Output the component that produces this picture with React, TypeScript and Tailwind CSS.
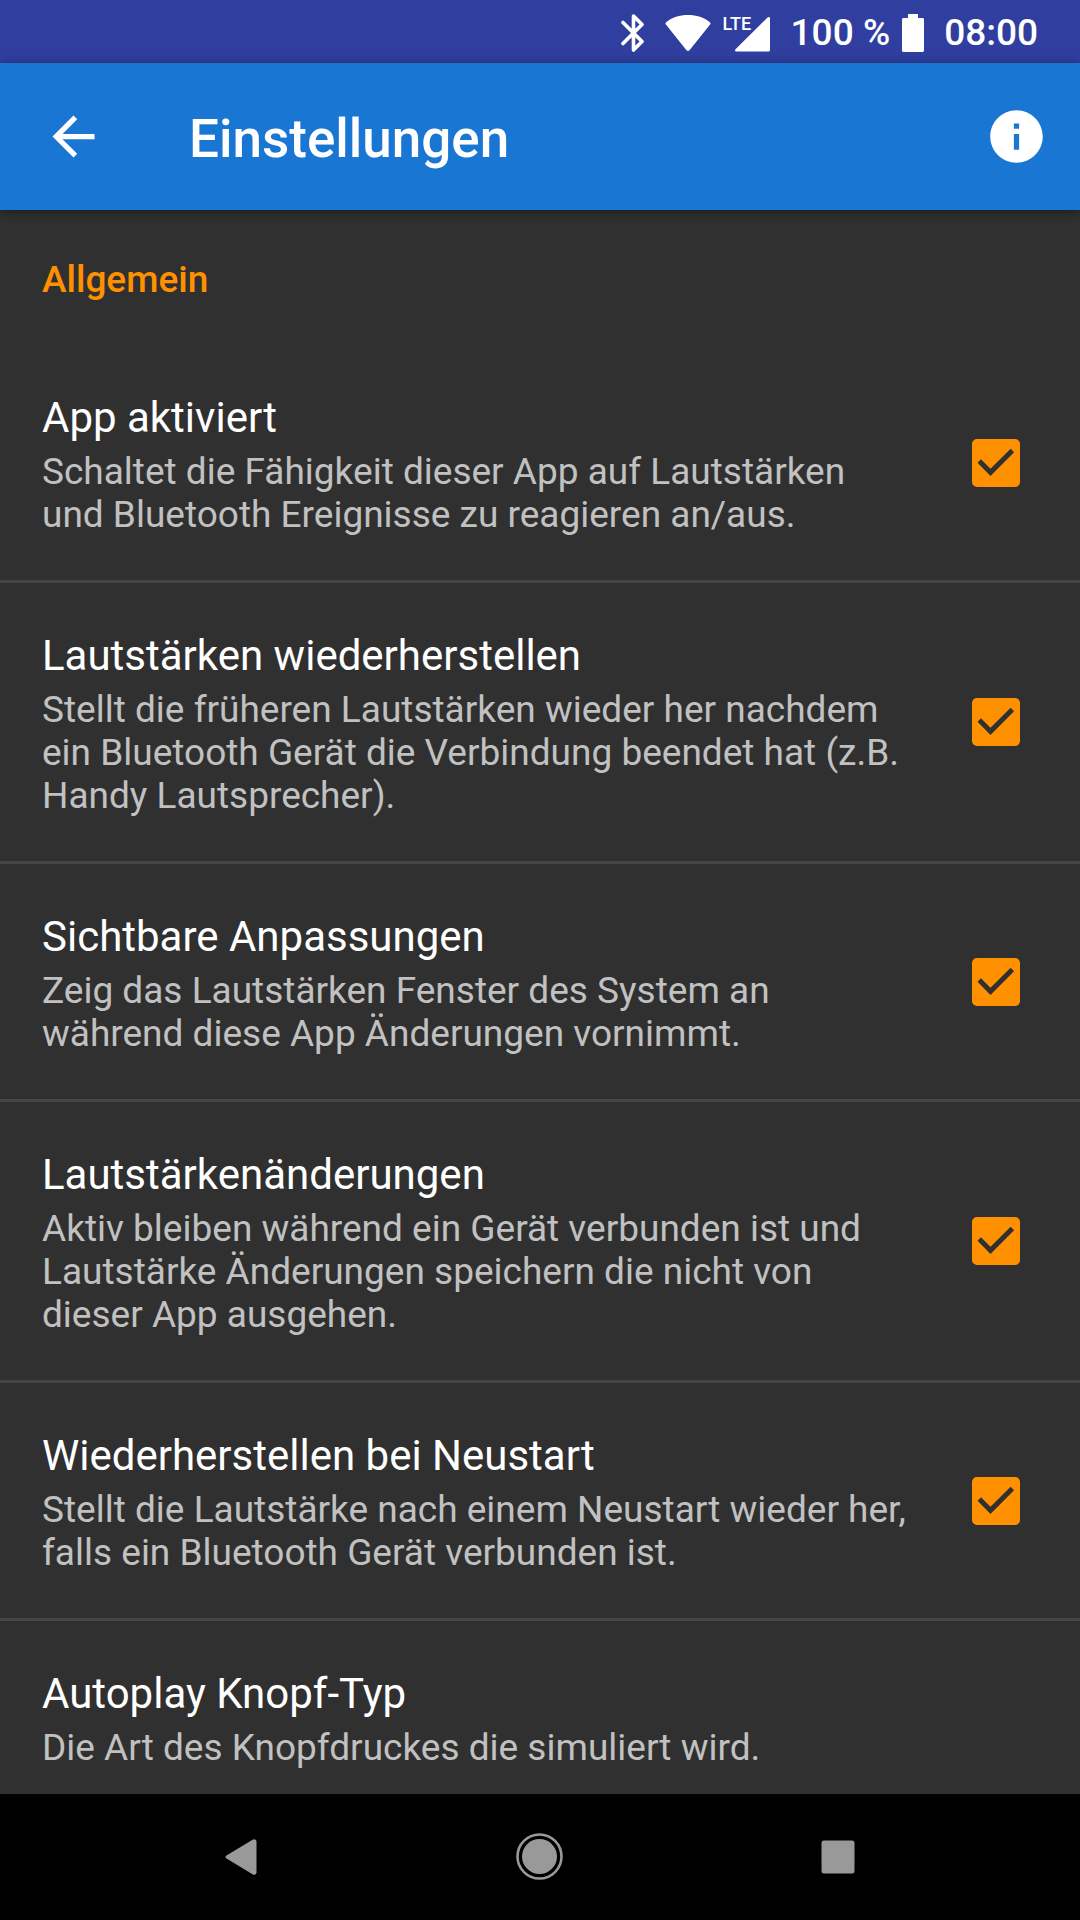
import { useState } from "react";

type Preference = {
  id: string;
  title: string;
  summary: string;
};

const preferences: Preference[] = [
  {
    id: "enabled",
    title: "App aktiviert",
    summary:
      "Schaltet die Fähigkeit dieser App auf Lautstärken und Bluetooth Ereignisse zu reagieren an/aus."
  },
  {
    id: "restore",
    title: "Lautstärken wiederherstellen",
    summary:
      "Stellt die früheren Lautstärken wieder her nachdem ein Bluetooth Gerät die Verbindung beendet hat (z.B. Handy Lautsprecher)."
  },
  {
    id: "visible",
    title: "Sichtbare Anpassungen",
    summary:
      "Zeig das Lautstärken Fenster des System an während diese App Änderungen vornimmt."
  },
  {
    id: "listener",
    title: "Lautstärkenänderungen",
    summary:
      "Aktiv bleiben während ein Gerät verbunden ist und Lautstärke Änderungen speichern die nicht von dieser App ausgehen."
  },
  {
    id: "boot",
    title: "Wiederherstellen bei Neustart",
    summary:
      "Stellt die Lautstärke nach einem Neustart wieder her, falls ein Bluetooth Gerät verbunden ist."
  }
];

export default function App() {
  const [checked, setChecked] = useState<Record<string, boolean>>({
    enabled: true,
    restore: true,
    visible: true,
    listener: true,
    boot: true
  });

  const toggle = (id: string) => {
    setChecked((current) => ({ ...current, [id]: !current[id] }));
  };

  return (
    <div className="flex h-screen flex-col bg-[#303030] font-['Roboto',sans-serif] text-white">
      <StatusBar />
      <AppBar />

      <main className="min-h-0 flex-1 overflow-y-auto [scrollbar-width:none]">
        <h2 className="px-[42px] pt-12 pb-11 text-[37px] leading-[43px] font-medium text-[#ff9100]">
          Allgemein
        </h2>

        {preferences.map((preference) => (
          <PreferenceRow
            key={preference.id}
            preference={preference}
            checked={checked[preference.id]}
            onToggle={() => toggle(preference.id)}
          />
        ))}

        <button type="button" className="block w-full px-[42px] pt-12 pb-11 text-left">
          <PreferenceText
            title="Autoplay Knopf-Typ"
            summary="Die Art des Knopfdruckes die simuliert wird."
          />
        </button>
      </main>

      <NavigationBar />
    </div>
  );
}

function StatusBar() {
  return (
    <div className="flex h-[63px] shrink-0 items-center justify-end bg-[#303f9f] pt-0.5 pr-[42px] text-[37px] leading-[43px] font-medium">
      <svg viewBox="0 0 24 38" className="mr-5 h-[38px] w-6" aria-hidden="true">
        <path
          d="M2 8.5 21 27.5 12.5 36V2L21 10.500 2 29.500"
          fill="none"
          stroke="currentColor"
          strokeWidth="3.600"
          strokeLinecap="round"
          strokeLinejoin="round"
        />
      </svg>
      <svg viewBox="0 0 46 38" className="mr-3 h-[38px] w-[46px]" aria-hidden="true">
        <path
          d="M1.200 8.200C7 3.500 14.500 1 23 1s16 2.500 21.800 7.200c.8.700.9 1.600.3 2.400L24.500 36.200c-.9 1.100-2.100 1.100-3 0L.9 10.600c-.6-.8-.5-1.700.3-2.400Z"
          fill="currentColor"
        />
      </svg>
      <div className="relative mr-[21px] h-[38px] w-[47px]">
        <span className="absolute top-0 left-0 text-lg leading-5 font-medium">LTE</span>
        <svg viewBox="0 0 47 38" className="h-[38px] w-[47px]" aria-hidden="true">
          <path
            d="M44.500 3.500c1-1 2.500-.6 2.500.9V36c0 .9-.7 1.500-1.500 1.500h-32c-1.400 0-1.900-1.400-1-2.300Z"
            fill="currentColor"
          />
        </svg>
      </div>
      <span className="mr-3 whitespace-nowrap">100 %</span>
      <svg viewBox="0 0 22 38" className="mr-5 h-[38px] w-[22px]" aria-hidden="true">
        <path
          d="M6 0h10v4h4.500c.8 0 1.500.7 1.500 1.500v31c0 .8-.7 1.500-1.500 1.500h-19C.7 38 0 37.300 0 36.500v-31C0 4.700.7 4 1.500 4H6Z"
          fill="currentColor"
        />
      </svg>
      <time>08:00</time>
    </div>
  );
}

function AppBar() {
  return (
    <header className="z-10 flex h-[147px] shrink-0 items-center bg-[#1976d2] pr-8 pl-[42px] shadow-[0_2px_10px_rgba(0,0,0,0.45)]">
      <button type="button" aria-label="Zurück">
        <svg viewBox="0 0 24 24" className="size-[63px]" fill="currentColor">
          <path d="M20 11H7.830l5.590-5.590L12 4l-8 8 8 8 1.410-1.410L7.830 13H20v-2z" />
        </svg>
      </button>
      <h1 className="ml-[84px] flex-1 pt-1 text-[53px] leading-[62px] font-medium">
        Einstellungen
      </h1>
      <button type="button" aria-label="Info">
        <svg viewBox="0 0 24 24" className="size-[63px]" fill="currentColor">
          <path d="M12 2C6.480 2 2 6.480 2 12s4.480 10 10 10 10-4.480 10-10S17.520 2 12 2zm1 15h-2v-6h2v6zm0-8h-2V7h2v2z" />
        </svg>
      </button>
    </header>
  );
}

type PreferenceRowProps = {
  preference: Preference;
  checked: boolean;
  onToggle: () => void;
};

function PreferenceRow({ preference, checked, onToggle }: PreferenceRowProps) {
  return (
    <label
      htmlFor={preference.id}
      className="flex items-center gap-[42px] border-b-3 border-[#464646] px-[42px]"
    >
      <span className="block min-w-0 flex-1 pt-12 pb-11">
        <PreferenceText title={preference.title} summary={preference.summary} />
      </span>
      <span className="grid w-[84px] shrink-0 place-items-center">
        <input
          id={preference.id}
          type="checkbox"
          checked={checked}
          onChange={onToggle}
          className="peer col-start-1 row-start-1 size-12 appearance-none rounded-[5px] border-[5px] border-[#c1c1c1] checked:border-[#ff9100] checked:bg-[#ff9100]"
        />
        <svg
          viewBox="0 0 48 48"
          className="pointer-events-none invisible col-start-1 row-start-1 size-12 fill-[#303030] peer-checked:visible"
          aria-hidden="true"
        >
          <path d="M18.500 37 5.500 23.700l3.500-3.500 9.500 9.600L38.600 9.800l3.500 3.500Z" />
        </svg>
      </span>
    </label>
  );
}

function PreferenceText({ title, summary }: { title: string; summary: string }) {
  return (
    <>
      <span className="block text-[42px] leading-[49px]">{title}</span>
      <span className="mt-2 block text-[37px] leading-[43px] text-[#c1c1c1]">{summary}</span>
    </>
  );
}

function NavigationBar() {
  return (
    <nav className="flex h-[126px] shrink-0 items-center justify-center bg-black text-[#999999]">
      <button type="button" aria-label="Zurück" className="flex w-[298px] justify-center">
        <svg viewBox="0 0 48 48" className="size-12" fill="currentColor">
          <path d="M8.500 22.500 34.500 6.700c2-1.200 4-.3 4 2v30.600c0 2.300-2 3.200-4 2L8.500 25.500c-1.400-.9-1.400-2.100 0-3Z" />
        </svg>
      </button>
      <button type="button" aria-label="Startseite" className="flex w-[298px] justify-center">
        <svg viewBox="0 0 48 48" className="size-12" fill="currentColor">
          <circle cx="23.500" cy="23.500" r="17.500" />
          <circle
            cx="23.500"
            cy="23.500"
            r="22"
            fill="none"
            stroke="currentColor"
            strokeWidth="2.600"
          />
        </svg>
      </button>
      <button type="button" aria-label="Übersicht" className="flex w-[298px] justify-center">
        <svg viewBox="0 0 48 48" className="size-12" fill="currentColor">
          <rect x="7.500" y="7.500" width="33" height="33" rx="2.500" />
        </svg>
      </button>
    </nav>
  );
}
